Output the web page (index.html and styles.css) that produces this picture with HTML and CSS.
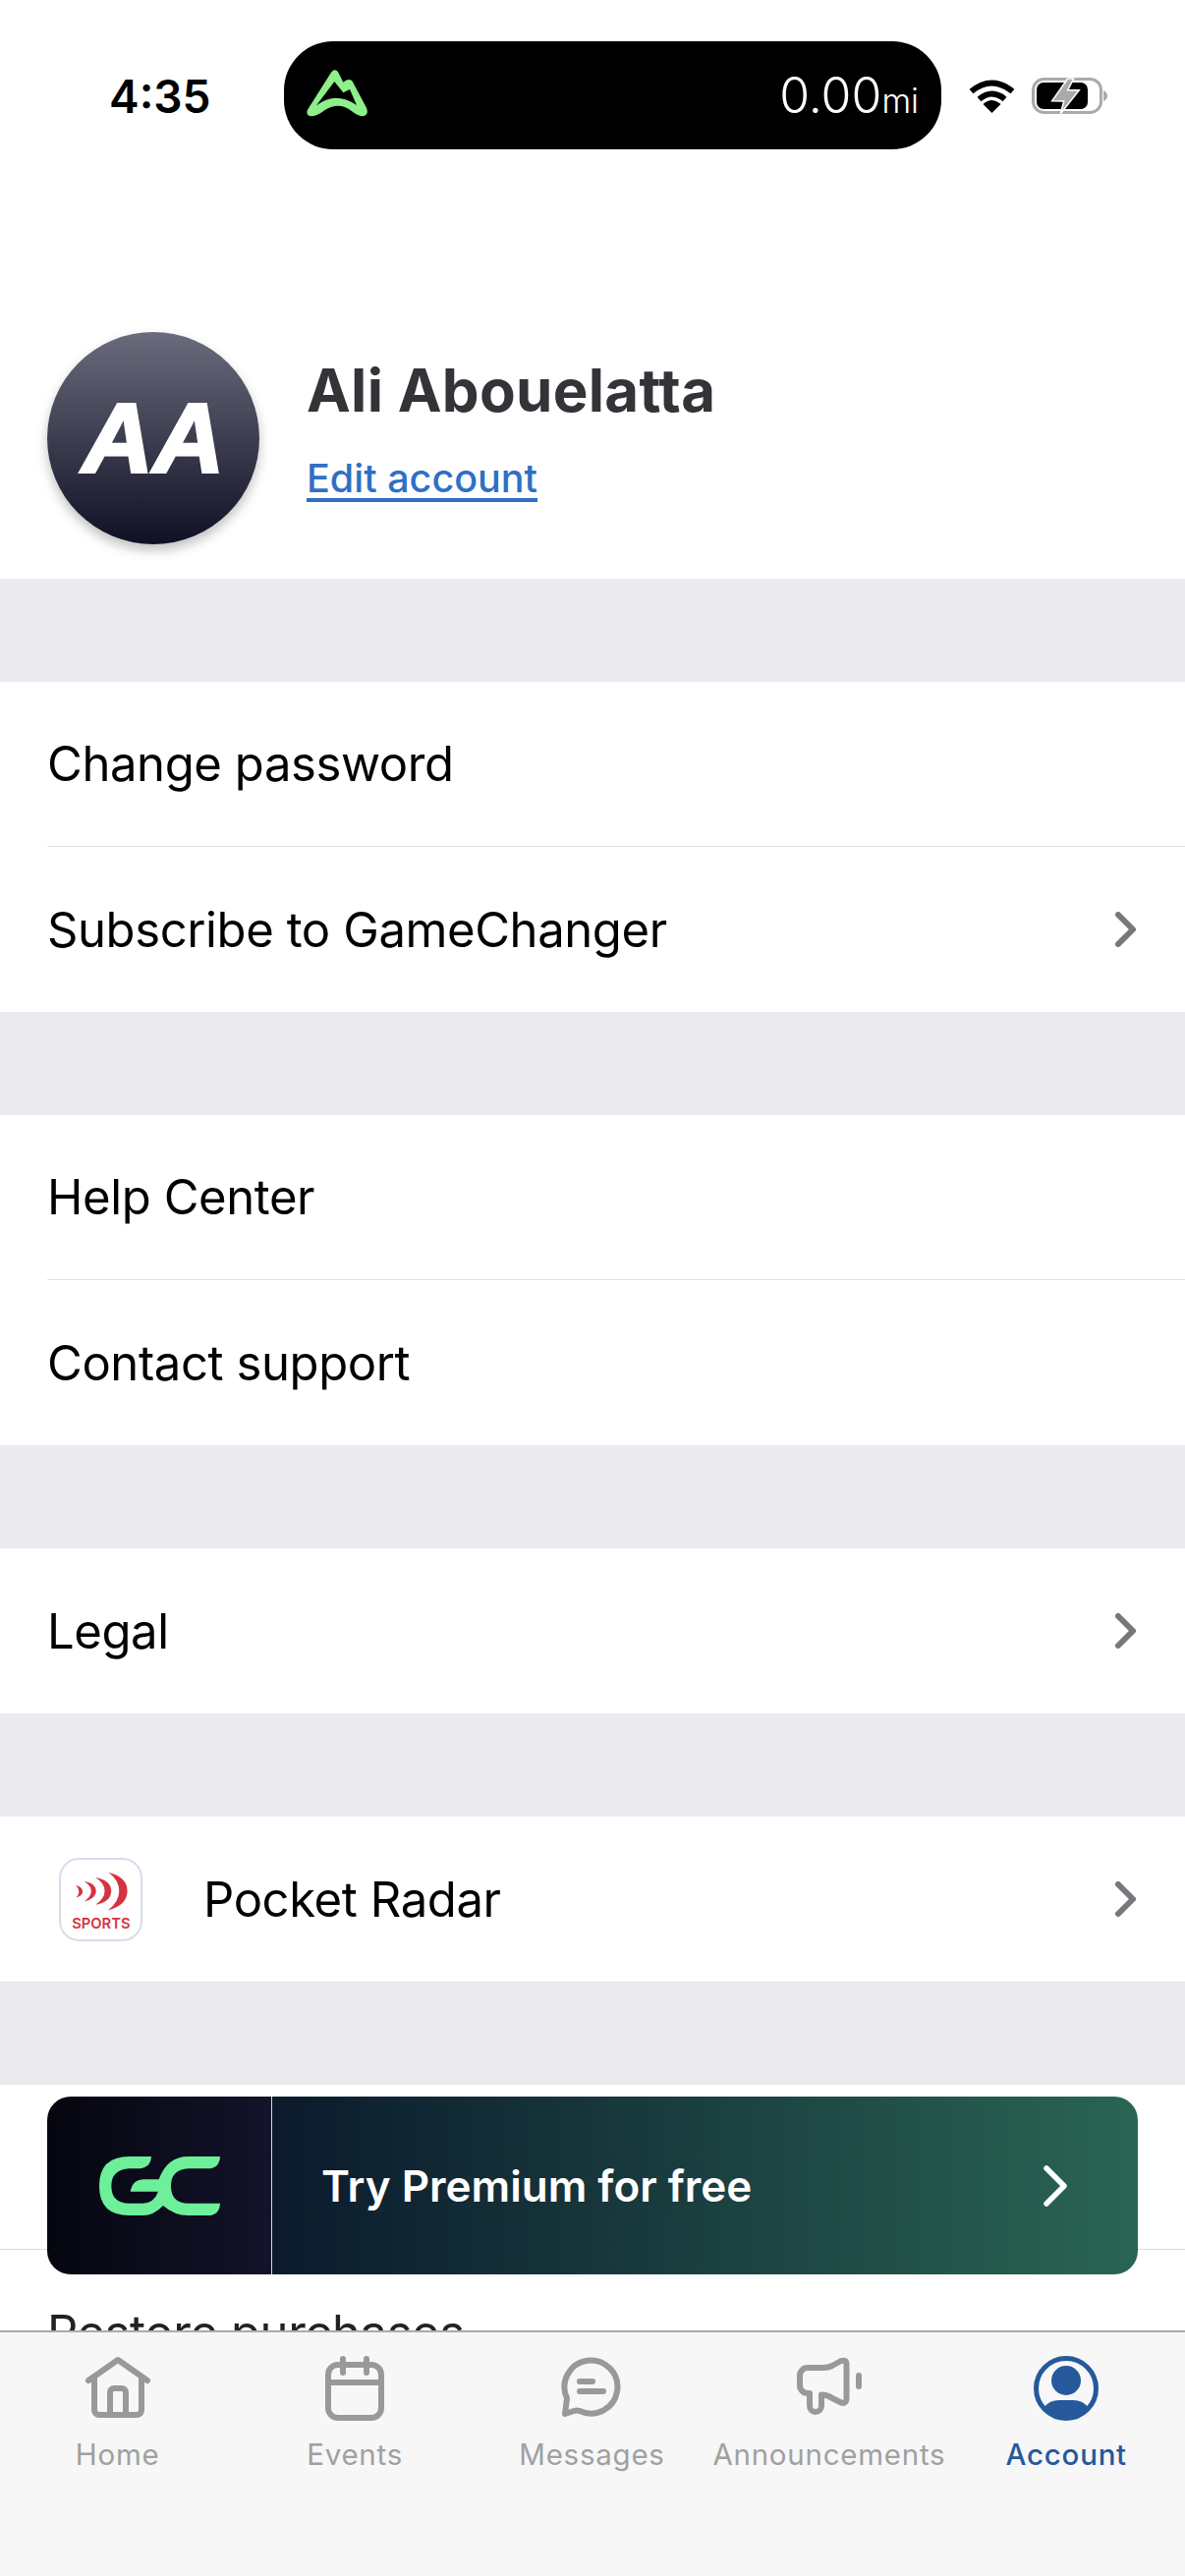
FILE: index.html
```html
<!DOCTYPE html>
<html lang="en">
<head>
    <meta charset="UTF-8">
    <meta name="viewport" content="width=device-width, initial-scale=1.0">
    <title>Account</title>
    <link rel="stylesheet" href="styles.css">
</head>
<body>
    <div class="screen">
        <div class="status-bar">
            <span class="time">4:35</span>
            <div class="pill">
                <svg class="pill-logo" viewBox="90 125 195 150">
                    <path fill="#8ef08a" fill-rule="evenodd" d="M168 136 Q180 122 190 136 L205 166 Q220 152 232 162 L276 244 Q284 266 266 270 Q250 270 225 250 Q190 226 150 250 Q125 270 105 270 Q90 266 96 250 Z M122 238 Q150 216 180 214 Q215 214 246 236 L225 188 L205 198 L178 164 Z"/>
                </svg>
                <span class="distance">0.00<small>mi</small></span>
            </div>
            <svg class="wifi" viewBox="0 0 47 35">
                <path fill="none" stroke="#000" stroke-width="6" d="M2.5 13 Q23.5 -4 44.5 13"/>
                <path fill="none" stroke="#000" stroke-width="6" d="M10.5 21 Q23.5 10 36.5 21"/>
                <path d="M14.5 26 Q23.5 18 32.5 26 L23.5 35 Z"/>
            </svg>
            <svg class="battery" viewBox="0 0 78 38">
                <rect x="1.5" y="1.5" width="69" height="34" rx="11" fill="none" stroke="#aaa" stroke-width="3"/>
                <path d="M73 13 Q77 15 77 18.5 Q77 22 73 24 Z" fill="#aaa"/>
                <rect x="5" y="5" width="52" height="27" rx="7"/>
                <path d="M36.7 1 L20.7 23.7 L32.7 24 L29.3 36.7 L48.3 12.7 H36.7 L42.7 1 Z" fill="#aaa" stroke="#fff" stroke-width="1.5"/>
            </svg>
        </div>

        <div class="profile">
            <div class="avatar">AA</div>
            <div class="profile-info">
                <div class="name">Ali Abouelatta</div>
                <a class="edit-link">Edit account</a>
            </div>
        </div>

        <div class="group">
            <div class="row">Change password</div>
            <div class="row">Subscribe to GameChanger
                <svg class="chevron" viewBox="0 0 21 36"><path d="M3 3 L18 18 L3 33"/></svg>
            </div>
        </div>

        <div class="group">
            <div class="row">Help Center</div>
            <div class="row">Contact support</div>
        </div>

        <div class="group">
            <div class="row">Legal
                <svg class="chevron" viewBox="0 0 21 36"><path d="M3 3 L18 18 L3 33"/></svg>
            </div>
        </div>

        <div class="group">
            <div class="row">
                <svg class="radar-icon" viewBox="179 181 254 254">
                    <rect x="182" y="184" width="248" height="248" rx="58" fill="#fff" stroke="#d5deea" stroke-width="6"/>
                    <path fill="#d4343f" d="M330 225 Q387 240 387 282 Q387 325 328 341 Q362 315 362 282 Q362 250 330 225 Z"/>
                    <path fill="#d4343f" d="M290 241 Q338 250 338 282 Q338 315 290 324 Q318 305 318 282 Q318 258 290 241 Z"/>
                    <path fill="#d4343f" d="M255 252 Q292 258 292 282 Q292 306 255 314 Q277 300 277 282 Q277 266 255 252 Z"/>
                    <path fill="#d4343f" d="M230 265 Q251 270 251 284 Q251 296 230 302 Q240 294 240 284 Q240 274 230 265 Z"/>
                    <text class="radar-text" x="307" y="396" text-anchor="middle">SPORTS</text>
                </svg>
                <span class="radar-label">Pocket Radar</span>
                <svg class="chevron" viewBox="0 0 21 36"><path d="M3 3 L18 18 L3 33"/></svg>
            </div>
        </div>

        <div class="group last-group">
            <div class="row full-line">
                <div class="banner">
                    <div class="banner-logo">
                        <svg class="gc-logo" viewBox="33 45 369 180">
                            <path fill="#6ef09a" d="M192 45 Q190 82 150 82 H125 Q70 85 70 135 Q70 188 125 188 H165 Q200 188 213 152 H128 Q135 115 170 115 H215 Q240 45 305 45 H402 Q400 82 365 82 H305 Q252 85 252 135 Q252 188 305 188 H402 Q400 225 365 225 H305 Q262 225 228 195 Q200 225 165 225 H125 Q33 225 33 135 Q33 45 125 45 Z"/>
                        </svg>
                    </div>
                    <div class="banner-main">
                        <span>Try Premium for free</span>
                        <svg class="banner-chevron" viewBox="0 0 24 42"><path d="M3 3 L21 21 L3 39"/></svg>
                    </div>
                </div>
            </div>
            <div class="row">Restore purchases</div>
        </div>

        <div class="tab-bar">
            <div class="tab">
                <svg class="tab-icon" viewBox="0 0 66 66">
                    <path d="M3 25 L33 4 L63 25 M9 22 V55 a5 5 0 0 0 5 5 H52 a5 5 0 0 0 5 -5 V22 M25 60 V37 a4 4 0 0 1 4 -4 H37 a4 4 0 0 1 4 4 V60"/>
                </svg>
                <span>Home</span>
            </div>
            <div class="tab">
                <svg class="tab-icon" viewBox="0 0 66 66">
                    <rect x="6" y="9" width="54" height="54" rx="10"/>
                    <path d="M6 27 H60 M21 3 V17 M45 3 V17"/>
                </svg>
                <span>Events</span>
            </div>
            <div class="tab">
                <svg class="tab-icon" viewBox="0 0 66 66">
                    <path d="M8 43 A27 27 0 1 1 21 56 Q18 55 15 56 L6 59 Z"/>
                    <path d="M21 26 H34 M21 36 H45"/>
                </svg>
                <span>Messages</span>
            </div>
            <div class="tab">
                <svg class="tab-icon" viewBox="0 0 66 66">
                    <path d="M11 12 H27 Q32 12 36 10 L44 5.5 Q50 3 50.5 8 V43 Q50 50 44 47 L36 43 Q31 39.5 25 39.5 V51 a6 6 0 0 1 -12 0 V38 H11 a8 8 0 0 1 -8 -8 V20 a8 8 0 0 1 8 -8 Z"/>
                    <path d="M63 20 V31"/>
                </svg>
                <span>Announcements</span>
            </div>
            <div class="tab active">
                <svg class="tab-icon" viewBox="0 0 66 66">
                    <circle cx="33" cy="33" r="30.5"/>
                    <circle class="solid" cx="33" cy="25" r="15"/>
                    <path class="solid" d="M11 52 Q16 45 26 45 H40 Q50 45 55 52 A30 30 0 0 1 11 52 Z"/>
                </svg>
                <span>Account</span>
            </div>
        </div>
    </div>
</body>
</html>
```

FILE: styles.css
```css
* {
    box-sizing: border-box;
}
body {
    margin: 0;
    font-family: Inter, "Liberation Sans", sans-serif;
    background-color: #fff;
}
.screen {
    position: relative;
    width: 1206px;
    height: 2622px;
    overflow: hidden;
    background-color: #eaeaef;
}

/* status bar */
.status-bar {
    display: flex;
    align-items: flex-start;
    height: 194px;
    padding: 0 0 0 111px;
    background: #fff;
}
.time {
    width: 178px;
    margin-top: 74px;
    font-size: 46px;
    line-height: 48px;
    font-weight: 600;
    color: #000;
}
.pill {
    display: flex;
    align-items: center;
    justify-content: space-between;
    width: 669px;
    height: 110px;
    margin-top: 42px;
    padding: 0 23px 0 22px;
    background: #000;
    border-radius: 50px;
}
.pill-logo {
    width: 65px;
    height: 50px;
    margin-top: -4px;
}
.distance {
    color: #fff;
    font-size: 50px;
    font-weight: 300;
}
.distance small {
    font-size: 34px;
}
.wifi {
    width: 47px;
    height: 35px;
    margin: 80px 17px 0 28px;
}
.battery {
    width: 78px;
    height: 38px;
    margin-top: 79px;
}

/* profile header */
.profile {
    display: flex;
    align-items: flex-start;
    height: 395px;
    padding: 144px 0 0 48px;
    background: #fff;
}
.avatar {
    width: 216px;
    height: 216px;
    border-radius: 50%;
    background: linear-gradient(#6a6b7c, #0f1024);
    box-shadow: 0 6px 12px rgba(0, 0, 0, 0.25);
    color: #fff;
    font-family: "Liberation Sans", sans-serif;
    font-size: 100px;
    font-weight: 700;
    font-style: italic;
    line-height: 216px;
    text-align: center;
    -webkit-text-stroke: 3px #fff;
}
.profile-info {
    margin-left: 48px;
    padding-top: 24px;
}
.name {
    font-size: 60px;
    line-height: 70px;
    font-weight: 700;
    letter-spacing: 0.3px;
    color: #333338;
}
.edit-link {
    display: inline-block;
    margin-top: 31px;
    font-size: 39.5px;
    line-height: 48px;
    font-weight: 500;
    color: #2f6fc6;
    text-decoration: underline;
    text-decoration-thickness: 4px;
    text-underline-offset: 6px;
}

/* list */
.group {
    margin-top: 105px;
    background: #fff;
}
.row {
    display: flex;
    align-items: center;
    height: 168px;
    margin-left: 48px;
    padding-right: 50px;
    font-size: 49px;
    letter-spacing: -0.4px;
    color: #000;
    border-bottom: 1px solid #e0e0e4;
}
.row:last-child {
    border-bottom: none;
}
.full-line {
    margin-left: 0;
    border-bottom-color: #d5dce6;
}
.chevron {
    width: 21px;
    height: 36px;
    margin-left: auto;
    fill: none;
    stroke: #77777c;
    stroke-width: 6;
    stroke-linecap: round;
    stroke-linejoin: round;
}
.radar-icon {
    width: 85px;
    height: 85px;
    margin-left: 12px;
}
.radar-text {
    font-size: 44px;
    font-weight: 600;
    letter-spacing: 0;
    fill: #d4343f;
}
.radar-label {
    margin-left: 62px;
}
.last-group {
    height: 500px;
}
.last-group .row:last-child {
    margin-left: 48px;
    color: #222;
}

/* premium banner sits over the first row */
.banner {
    position: absolute;
    left: 48px;
    top: 2134px;
    display: flex;
    width: 1110px;
    height: 181px;
    border-radius: 24px;
    overflow: hidden;
    color: #fff;
}
.banner-logo {
    display: flex;
    align-items: center;
    justify-content: center;
    width: 229px;
    background: linear-gradient(90deg, #05060f, #13132a);
    border-right: 1px solid #d8dce2;
}
.gc-logo {
    width: 123px;
    height: 60px;
}
.banner-main {
    display: flex;
    flex: 1;
    align-items: center;
    justify-content: space-between;
    padding: 0 72px 0 50px;
    background: linear-gradient(90deg, #0b1a2c, #2a6554);
    font-size: 44px;
    font-weight: 600;
    letter-spacing: 0;
}
.banner-chevron {
    width: 24px;
    height: 42px;
    fill: none;
    stroke: #fff;
    stroke-width: 5.5;
    stroke-linecap: round;
    stroke-linejoin: round;
}

/* bottom tabs */
.tab-bar {
    position: absolute;
    left: 0;
    bottom: 0;
    display: flex;
    width: 100%;
    height: 250px;
    padding-top: 24px;
    background: #f7f7f7;
    border-top: 2px solid #aaa;
}
.tab {
    display: flex;
    flex: 0 0 241.4px;
    flex-direction: column;
    align-items: center;
    color: #a0a0a0;
    font-size: 29.5px;
    font-weight: 400;
    letter-spacing: 0.75px;
}
.tab:first-child {
    margin-left: -1px;
}
.tab span {
    margin-top: 16px;
    line-height: 36px;
}
.tab-icon {
    width: 66px;
    height: 66px;
    fill: none;
    stroke: #999;
    stroke-width: 6;
    stroke-linecap: round;
    stroke-linejoin: round;
}
.tab.active {
    color: #25599c;
    font-weight: 500;
}
.tab.active .tab-icon {
    stroke: #25599c;
    stroke-width: 5;
}
.tab-icon .solid {
    fill: #25599c;
    stroke: none;
}
```
